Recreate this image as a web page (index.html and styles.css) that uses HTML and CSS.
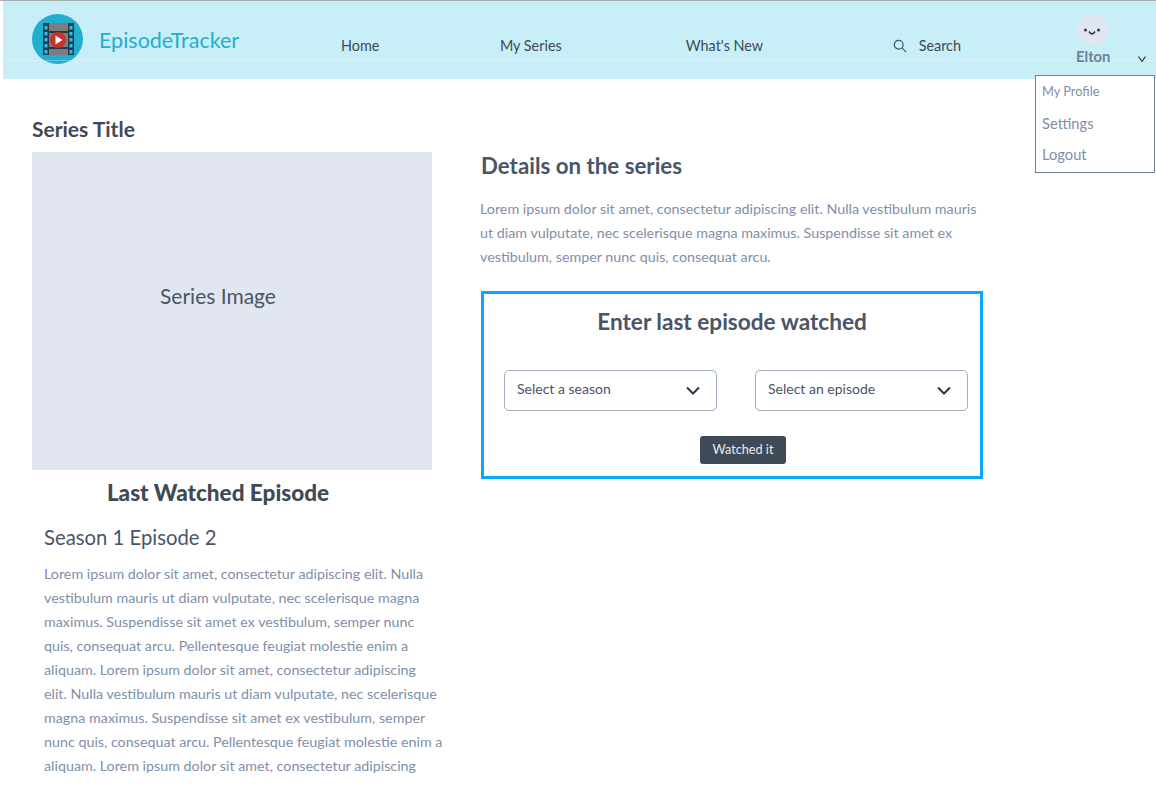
FILE: index.html
```html
<!DOCTYPE html>
<html lang="en">
<head>
    <meta charset="UTF-8">
    <meta name="viewport" content="width=device-width, initial-scale=1.0">
    <title>EpisodeTracker</title>
    <link rel="stylesheet" href="styles.css">
</head>
<body>
    <header class="topbar">
        <div class="brand">
            <svg class="logo" viewBox="0 0 52 50" width="52" height="50">
                <ellipse cx="25.500" cy="25" rx="25.500" ry="25" fill="#22aecf"/>
                <rect x="17" y="9" width="19" height="32" fill="#7d7d7d"/>
                <rect x="11" y="9" width="6" height="32" fill="#233a4d"/>
                <rect x="36" y="9" width="6" height="32" fill="#233a4d"/>
                <rect x="17" y="17" width="19" height="2" fill="#233a4d"/>
                <rect x="17" y="33" width="19" height="2" fill="#233a4d"/>
                <g fill="#35bde0">
                    <rect x="12.500" y="12" width="3" height="3.500"/>
                    <rect x="12.500" y="18" width="3" height="3.500"/>
                    <rect x="12.500" y="24" width="3" height="3.500"/>
                    <rect x="12.500" y="30" width="3" height="3.500"/>
                    <rect x="12.500" y="36" width="3" height="3.500"/>
                    <rect x="37.500" y="12" width="3" height="3.500"/>
                    <rect x="37.500" y="18" width="3" height="3.500"/>
                    <rect x="37.500" y="24" width="3" height="3.500"/>
                    <rect x="37.500" y="30" width="3" height="3.500"/>
                    <rect x="37.500" y="36" width="3" height="3.500"/>
                </g>
                <circle cx="26" cy="26" r="8" fill="#c9302c"/>
                <path d="M23.500 21.500v9l7-4.500z" fill="#fff"/>
            </svg>
            <span class="brand-name">EpisodeTracker</span>
        </div>
        <nav class="nav">
            <a class="nav-home">Home</a>
            <a class="nav-series">My Series</a>
            <a class="nav-new">What's New</a>
            <a class="nav-search">
                <svg viewBox="0 0 16 16" width="14" height="14" fill="none" stroke="#4a5568" stroke-width="1.400">
                    <circle cx="6.500" cy="6.500" r="5"/>
                    <path d="M10.200 10.200 15 15"/>
                </svg>
                Search
            </a>
        </nav>
        <div class="user">
            <div class="avatar">
                <svg viewBox="0 0 31 30" width="31" height="30" fill="none" stroke="#2d3748">
                    <circle cx="8.500" cy="15" r="1.500" fill="#2d3748" stroke="none"/>
                    <circle cx="21.500" cy="15" r="1.500" fill="#2d3748" stroke="none"/>
                    <path d="M12 16.500q3 5 6 0" stroke-width="1.500"/>
                </svg>
            </div>
            <span class="user-name">Elton</span>
        </div>
        <svg class="caret" viewBox="0 0 8 6" width="8" height="6" fill="none" stroke="#2d3748" stroke-width="1.200">
            <path d="M.5 .5 4 5.500 7.500 .5"/>
        </svg>
        <div class="hairline"></div>
    </header>

    <div class="user-menu">
        <a class="menu-first">My Profile</a>
        <a>Settings</a>
        <a>Logout</a>
    </div>

    <main class="page">
        <section class="col-left">
            <h3 class="series-title">Series Title</h3>
            <div class="series-image">Series Image</div>
            <h2 class="last-title">Last Watched Episode</h2>
            <div class="episode">
                <h4>Season 1 Episode 2</h4>
                <p>Lorem ipsum dolor sit amet, consectetur adipiscing elit. Nulla vestibulum mauris ut diam vulputate, nec scelerisque magna maximus. Suspendisse sit amet ex vestibulum, semper nunc quis, consequat arcu. Pellentesque feugiat molestie enim a aliquam. Lorem ipsum dolor sit amet, consectetur adipiscing<br>elit. Nulla vestibulum mauris ut diam vulputate, nec scelerisque magna maximus. Suspendisse sit amet ex vestibulum, semper nunc quis, consequat arcu. Pellentesque feugiat molestie enim a aliquam. Lorem ipsum dolor sit amet, consectetur adipiscing</p>
            </div>
        </section>
        <section class="col-right">
            <h3 class="details-title">Details on the series</h3>
            <p class="details-text">Lorem ipsum dolor sit amet, consectetur adipiscing elit. Nulla vestibulum mauris ut diam vulputate, nec scelerisque magna maximus. Suspendisse sit amet ex vestibulum, semper nunc quis, consequat arcu.</p>
            <div class="entry-box">
                <h3>Enter last episode watched</h3>
                <div class="selects">
                    <div class="select">
                        Select a season
                        <svg viewBox="0 0 14 9" width="14" height="9" fill="none" stroke="#2d3748" stroke-width="2"><path d="M1 1.500 7 7.500 13 1.500"/></svg>
                    </div>
                    <div class="select">
                        Select an episode
                        <svg viewBox="0 0 14 9" width="14" height="9" fill="none" stroke="#2d3748" stroke-width="2"><path d="M1 1.500 7 7.500 13 1.500"/></svg>
                    </div>
                </div>
                <div class="actions">
                    <button class="watched">Watched it</button>
                </div>
            </div>
        </section>
    </main>
</body>
</html>
```

FILE: styles.css
```css
* {
    box-sizing: border-box;
}
html, body {
    height: 100%;
}
body {
    margin: 0;
    font-family: Lato, sans-serif;
    color: #3f4a56;
    background: white;
    overflow: hidden;
    border-top: 1px solid #a9aeb2;
}
h2, h3, h4, p {
    margin: 0;
}

.topbar {
    position: relative;
    display: flex;
    align-items: flex-start;
    height: 78px;
    margin-left: 3px;
    padding-left: 29px;
    background: #c8eef7;
}
.hairline {
    position: absolute;
    left: 0;
    right: 0;
    top: 59px;
    height: 1px;
    background: rgba(255, 255, 255, 0.3);
}
.brand {
    display: flex;
    align-items: center;
    gap: 15px;
    width: 309px;
    padding-top: 13px;
}
.logo {
    flex: none;
}
.brand-name {
    font-size: 21.500px;
    color: #22aecf;
    padding-top: 2px;
}
.nav {
    display: flex;
    width: 620px;
    padding-top: 36px;
    font-size: 14.400px;
    line-height: 18px;
    color: #3f4a56;
}
.nav-home { width: 159px; }
.nav-series { width: 186px; }
.nav-new { width: 207px; }
.nav-search {
    display: flex;
    align-items: center;
    gap: 12px;
}
.nav-search svg {
    flex: none;
}
.user {
    position: relative;
    z-index: 1;
    margin-left: 115px;
    padding-top: 14px;
    width: 50px;
}
.avatar {
    width: 31px;
    height: 30px;
    margin-left: 1px;
    margin-bottom: 1px;
    border-radius: 50%;
    background: #e2e6f1;
}
.user-name {
    display: block;
    font-size: 14.800px;
    font-weight: 700;
    line-height: 20px;
    color: #718096;
}
.caret {
    position: relative;
    z-index: 1;
    margin-left: 12px;
    margin-top: 55px;
}

.user-menu {
    position: absolute;
    left: 1035px;
    top: 75px;
    width: 120px;
    height: 98px;
    padding: 6px 6px;
    background: white;
    border: 1px solid #718096;
    color: #7f8fa9;
    font-size: 14.700px;
    display: flex;
    flex-direction: column;
}
.user-menu a {
    line-height: 31px;
}
.user-menu .menu-first {
    font-size: 12.800px;
    line-height: 18px;
    margin-bottom: 8px;
}

.page {
    display: flex;
    padding-left: 32px;
}
.col-left {
    width: 400px;
    padding-top: 37px;
}
.series-title {
    font-size: 21px;
    line-height: 26px;
    font-weight: 700;
    color: #3f4a56;
    margin-bottom: 10px;
}
.series-image {
    display: flex;
    align-items: center;
    justify-content: center;
    height: 318px;
    padding: 0 28px 32px 0;
    background: #e2e6f1;
    font-size: 21px;
    color: #4a5568;
}
.last-title {
    margin-top: 8px;
    padding-right: 28px;
    text-align: center;
    font-size: 22.500px;
    line-height: 29px;
    font-weight: 900;
    color: #3f4a56;
}
.episode {
    width: 413px;
    padding: 17px 0 0 12px;
}
.episode h4 {
    font-size: 20.300px;
    font-weight: 400;
    line-height: 26px;
    margin-bottom: 12px;
    color: #4a5568;
}
.episode p,
.details-text {
    font-size: 14.300px;
    line-height: 24px;
    color: #7f8fa9;
}
.col-right {
    width: 502px;
    margin-left: 49px;
    padding-top: 73px;
}
.details-title {
    font-size: 22.300px;
    line-height: 28px;
    font-weight: 700;
    margin-bottom: 17px;
    color: #4a5568;
}
.details-text {
    margin-bottom: 22px;
    margin-left: -1px;
}
.entry-box {
    height: 188px;
    padding: 14px 12px 0 20px;
    border: 3px solid #0aa5ff;
}
.entry-box h3 {
    text-align: center;
    font-size: 22.600px;
    line-height: 28px;
    font-weight: 700;
    margin-bottom: 34px;
    padding-right: 8px;
    color: #4a5568;
}
.selects {
    display: flex;
    gap: 38px;
}
.select {
    display: flex;
    align-items: center;
    justify-content: space-between;
    width: 213px;
    height: 41px;
    padding: 0 16px 4px 12px;
    border: 1px solid #a0aec0;
    border-radius: 5px;
    font-size: 14px;
    color: #4a5568;
}
.select svg {
    margin-top: 4px;
}
.actions {
    display: flex;
    justify-content: center;
    margin-top: 25px;
    padding-left: 14px;
}
.watched {
    height: 28px;
    padding: 0 13px 2px;
    border: none;
    border-radius: 3px;
    background: #3f4a56;
    color: #e8ebef;
    font-family: Lato, sans-serif;
    font-size: 12.700px;
}
```
